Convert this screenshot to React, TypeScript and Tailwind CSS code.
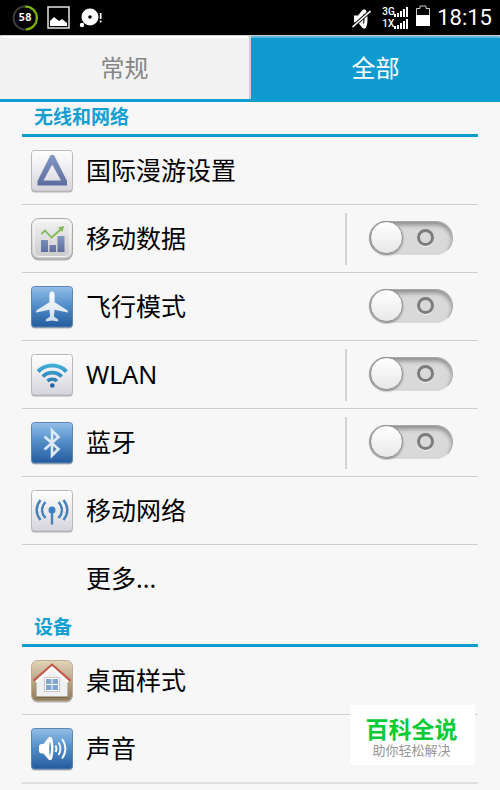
import { useId, useState } from "react";
import type { ReactNode } from "react";

type Tone = "light" | "blue" | "grey" | "tan";

const tones: Record<Tone, { top: string; bottom: string; edge: string; radius: number }> = {
  light: { top: "#ffffff", bottom: "#d6d5dc", edge: "#b9b9bd", radius: 3 },
  blue: { top: "#93bfe8", bottom: "#235b9d", edge: "#5c86b4", radius: 3 },
  grey: { top: "#f4f4f4", bottom: "#c9c9c9", edge: "#a9a9a9", radius: 7 },
  tan: { top: "#e3d3b5", bottom: "#8f7a58", edge: "#b9ad99", radius: 6 },
};

function Tile({ tone, children }: { tone: Tone; children: ReactNode }) {
  const id = useId();
  const t = tones[tone];
  return (
    <svg className="h-11 w-11 shrink-0" viewBox="0 0 44 44" aria-hidden="true">
      <defs>
        <linearGradient id={id} x1="0" y1="0" x2="0" y2="1">
          <stop offset="0" stopColor={t.top} />
          {tone === "blue" && <stop offset="0.45" stopColor="#5590ca" />}
          <stop offset="1" stopColor={t.bottom} />
        </linearGradient>
        <linearGradient id="slate" x1="0" y1="0" x2="0" y2="1">
          <stop offset="0" stopColor="#8199c4" />
          <stop offset="1" stopColor="#5d6c9f" />
        </linearGradient>
        <linearGradient id="sky" gradientUnits="userSpaceOnUse" x1="0" y1="9" x2="0" y2="35">
          <stop offset="0" stopColor="#45b9de" />
          <stop offset="1" stopColor="#2564a4" />
        </linearGradient>
        <linearGradient id="pearl" x1="0" y1="0" x2="0" y2="1">
          <stop offset="0" stopColor="#ffffff" />
          <stop offset="1" stopColor="#cfdcec" />
        </linearGradient>
      </defs>
      <rect x="1.5" y="2.5" width="41" height="41" rx={t.radius} fill="#000" opacity="0.28" />
      <rect x="1.5" y="1.5" width="41" height="40.5" rx={t.radius} fill={`url(#${id})`} stroke={t.edge} />
      {tone === "grey" && <rect x="4" y="4" width="36" height="35.5" rx="5" fill="none" stroke="#fff" opacity="0.8" />}
      {children}
    </svg>
  );
}

function RoamingIcon() {
  return (
    <Tile tone="light">
      <path fillRule="evenodd" fill="url(#slate)" d="M20.500 6h3.500l13 26v4.500H7.500V32zM22.200 15.500L13.500 31.500h17.500z" />
    </Tile>
  );
}

function DataIcon() {
  return (
    <Tile tone="grey">
      <path fill="url(#slate)" d="M11 23h7v12h-7zM19.500 28h6.500v7h-6.500zM27.500 19h7v16h-7z" />
      <path fill="none" stroke="#83b85a" strokeWidth="1.800" d="M11.500 17l3.500-3.500 6.500 7L32 11.500" />
      <path fill="#83b85a" d="M28 10.500l6-1.500-1.500 6z" />
    </Tile>
  );
}

function PlaneIcon() {
  return (
    <Tile tone="blue">
      <path
        fill="url(#pearl)"
        d="M22 6.500c1.700 0 2.600 1.500 2.600 4v6.800L37 25c1 .8 1 1.600.8 2.500l-13.200-2.800-.7 6.800 4.300 3v2L22 35.500l-6.200 1v-2l4.300-3-.7-6.800-13.200 2.800c-.2-.9-.2-1.700.8-2.500l12.400-7.700v-6.800c0-2.500.9-4 2.600-4z"
      />
    </Tile>
  );
}

function WlanIcon() {
  return (
    <Tile tone="light">
      <g fill="none" stroke="url(#sky)" strokeWidth="4">
        <path d="M8 18.500a20 20 0 0 1 28.500 0" />
        <path strokeWidth="3.600" d="M12.700 23.500a13.500 13.500 0 0 1 19 0" />
        <path strokeWidth="3.200" d="M17.500 28a6.700 6.700 0 0 1 9.500 0" />
      </g>
      <circle cx="22.300" cy="32.500" r="2.300" fill="#2564a4" />
    </Tile>
  );
}

function BluetoothIcon() {
  return (
    <Tile tone="blue">
      <path fill="none" stroke="#dce9f6" strokeWidth="2.600" d="M14.500 15.500l14 12.500-6.500 6.500V9.500l6.500 6.500-14 12.500" />
    </Tile>
  );
}

function AntennaIcon() {
  return (
    <Tile tone="light">
      <g fill="none" stroke="#4781ba" strokeWidth="2.400">
        <path d="M15.500 13c-4.500 5-4.500 11 0 16M28.500 13c4.500 5 4.500 11 0 16" />
        <path d="M10.500 11c-5 6.500-5 13.500 0 20M33.500 11c5 6.500 5 13.500 0 20" />
        <path d="M22 21v14.500" />
      </g>
      <circle cx="22" cy="21" r="3.500" fill="#3f7fc0" />
    </Tile>
  );
}

function HomeIcon() {
  return (
    <Tile tone="tan">
      <path fill="#5d4e35" opacity="0.5" d="M6.500 22h31v17h-31z" />
      <path fill="#f0f0f0" d="M22 7L6.500 21.500V37.500h31V21.500z" />
      <path fill="none" stroke="#fff" strokeWidth="2" d="M6 23L22 8.500 38 23" />
      <path fill="none" stroke="#c75650" strokeWidth="2" d="M3.500 21.500L22 5.500l18.500 16" />
      <path fill="#fff" stroke="#c8c8c8" d="M14.500 18.500h15v14h-15z" />
      <path fill="#7fa5d0" d="M16 20h5.500v5H16zM22.500 20H28v5h-5.500zM16 26h5.500v5H16zM22.500 26H28v5h-5.500z" />
    </Tile>
  );
}

function SoundIcon() {
  return (
    <Tile tone="blue">
      <path fill="#fff" d="M9 19.500c0-1.500 1-2.500 3-2.500h1.500l5-6.500c1.500-1.500 3.500-.5 4 2 1.300 6 1.300 12 0 18-.5 2.500-2.500 3.500-4 2l-5-6H12c-2 0-3-1-3-2.500z" />
      <path fill="#5d93c9" d="M20 14c1.400 4.500 1.400 11 0 15.500-1.200-4.500-1.200-11 0-15.500z" />
      <g fill="none" stroke="#f4f8fc" strokeWidth="2">
        <path d="M25.500 18.500c1.200 2 1.200 4.500 0 6.500" />
        <path d="M28.500 15.500c2.600 3.500 2.600 9 0 12.500" />
        <path d="M32 12c4.500 6 4.500 13.500 0 19.500" />
      </g>
    </Tile>
  );
}

function Toggle({ label }: { label: string }) {
  const [on, setOn] = useState(false);
  return (
    <label className="relative mr-[25px] mb-0.5 flex h-[34px] w-[84px] shrink-0 cursor-pointer items-center rounded-full border border-[#aaa] border-b-[#ddd] bg-[#d9d9d9] shadow-[inset_0_3px_4px_#8c8c8c]">
      <input
        type="checkbox"
        role="switch"
        aria-label={label}
        checked={on}
        onChange={(e) => setOn(e.target.checked)}
        className="peer absolute inset-0 cursor-pointer opacity-0"
      />
      <span className="h-[33px] w-[33px] rounded-full border border-[#8f8f8f] bg-linear-to-b from-white to-[#e8e8e8] shadow-[0_1px_2px_#777] peer-checked:order-last" />
      <span className="mx-[14px] h-[17px] w-[17px] rounded-full border-3 border-[#7c7c7c] shadow-[0_1px_0_#f5f5f5]" />
    </label>
  );
}

interface Item {
  label: string;
  icon?: ReactNode;
  toggle?: boolean;
  divided?: boolean;
}

const sections: { title: string; items: Item[] }[] = [
  {
    title: "无线和网络",
    items: [
      { label: "国际漫游设置", icon: <RoamingIcon /> },
      { label: "移动数据", icon: <DataIcon />, toggle: true, divided: true },
      { label: "飞行模式", icon: <PlaneIcon />, toggle: true },
      { label: "WLAN", icon: <WlanIcon />, toggle: true, divided: true },
      { label: "蓝牙", icon: <BluetoothIcon />, toggle: true, divided: true },
      { label: "移动网络", icon: <AntennaIcon /> },
      { label: "更多..." },
    ],
  },
  {
    title: "设备",
    items: [
      { label: "桌面样式", icon: <HomeIcon /> },
      { label: "声音", icon: <SoundIcon /> },
    ],
  },
];

function SignalBars() {
  return (
    <svg className="h-[10px] w-[15px]" viewBox="0 0 15 10" fill="#fff" aria-hidden="true">
      <path d="M0 7h2v3H0zM3 6h2v4H3zM6 4h2v6H6zM9 2h2v8H9zM12 0h2v10h-2z" />
    </svg>
  );
}

function StatusBar() {
  return (
    <header className="flex h-[35px] items-center bg-black pr-2 pl-3 text-white">
      <div className="flex items-center gap-[9px]">
        <div className="grid h-[26px] w-[26px] place-items-center font-['DejaVu_Sans_Mono',monospace] text-[11px] leading-none font-bold">
          <svg className="col-start-1 row-start-1 h-[26px] w-[26px]" viewBox="0 0 26 26" fill="none" strokeWidth="2" aria-hidden="true">
            <circle cx="13" cy="13" r="11.500" stroke="#3d3d3d" />
            <path d="M13 1.500a11.500 11.500 0 0 1 1 23" stroke="#7ab800" />
          </svg>
          <span className="col-start-1 row-start-1">58</span>
        </div>
        <svg className="h-[23px] w-[23px]" viewBox="0 0 23 23" aria-hidden="true">
          <rect x="1" y="1" width="21" height="21" fill="none" stroke="#e4e4e4" strokeWidth="1.500" />
          <path fill="#fff" d="M3 20v-5l4-4 5 4 3-2 5 4v3z" />
        </svg>
        <svg className="h-[22px] w-[24px]" viewBox="0 0 24 22" fill="#fff" aria-hidden="true">
          <path fillRule="evenodd" d="M11 1.500a8.500 8.500 0 1 0 0 17 8.500 8.500 0 0 0 0-17zm0 6.700a1.800 1.800 0 1 1 0 3.600 1.800 1.800 0 0 1 0-3.600z" />
          <circle cx="3" cy="18" r="2.200" />
          <path d="M20.800 6h1.700v6h-1.700zM20.800 13.500h1.700v2h-1.700z" />
        </svg>
      </div>
      <div className="ml-auto flex items-center gap-[7px]">
        <svg className="h-[22px] w-[20px]" viewBox="0 0 20 22" aria-hidden="true">
          <path fill="#fff" d="M3 8.500h4L11.500 3c3.500-2.500 5 2.500 5 9s-1.500 11.500-5 9L7 15.500H3z" />
          <path fill="#555" d="M12.500 6.500c1.700 3 1.700 8 0 11.500-1-3.500-1-8 0-11.500z" />
          <path fill="none" stroke="#000" strokeWidth="3.400" d="M1.500 20L19.500 4" />
          <path fill="none" stroke="#fff" strokeWidth="1.600" d="M1.500 20L19.500 4" />
        </svg>
        <div className="ml-1 grid grid-cols-[12px_15px] items-center gap-y-0.5 font-['Roboto',sans-serif] text-[10px] leading-[10px] font-medium">
          <span>3G</span>
          <SignalBars />
          <span>1X</span>
          <SignalBars />
        </div>
        <svg className="mb-1 h-[21px] w-[14px]" viewBox="0 0 14 21" aria-hidden="true">
          <path fill="none" stroke="#ccc" d="M.5 20V3.500H4V1h6v2.500h3.500V20z" />
          <path fill="#fff" d="M0 10h14v11H0z" />
        </svg>
        <time className="font-['Roboto',sans-serif] text-[22px] leading-none">18:15</time>
      </div>
    </header>
  );
}

export default function App() {
  const [tab, setTab] = useState("全部");
  return (
    <div className="min-h-screen bg-[#f7f7f7] font-['Noto_Sans','Noto_Sans_CJK_SC',sans-serif] text-black" lang="zh-CN">
      <StatusBar />
      <nav className="flex h-[67px] border-b-3 border-[#0f9bcf] bg-[#cdd0d1]">
        {["常规", "全部"].map((name) => (
          <button
            key={name}
            type="button"
            aria-pressed={tab === name}
            onClick={() => setTab(name)}
            className={
              tab === name
                ? "mt-px flex-1 rounded-t-xs border-t-2 border-[#5db7dc] bg-[#0f9bcf] pb-0.5 text-2xl text-white"
                : "mt-px mr-0.5 flex-1 rounded-t-xs border-t-2 border-white bg-[#f2f2f2] pb-0.5 text-2xl text-[#868686]"
            }
          >
            {name}
          </button>
        ))}
      </nav>
      <main className="px-[22px]">
        {sections.map((section) => (
          <section key={section.title}>
            <h2 className="h-[35px] border-b-3 border-[#0f9bcf] pl-3 text-[19px] leading-[30px] font-bold text-[#149fd2]">
              {section.title}
            </h2>
            <ul className="divide-y divide-[#cfcfcf]">
              {section.items.map((item) => (
                <li key={item.label} className="flex h-[68px] items-center pl-2 last:h-[67px]">
                  {item.icon ?? <span className="w-11" />}
                  <span className="flex-1 pb-0.5 pl-3 text-[25px] leading-8">{item.label}</span>
                  {item.divided && <span className="mr-[22px] h-[52px] w-0.5 bg-[#d2d2d2]" />}
                  {item.toggle && <Toggle label={item.label} />}
                </li>
              ))}
            </ul>
          </section>
        ))}
        <hr className="border-t-2 border-[#dedede]" />
      </main>
      <aside className="fixed right-[25px] bottom-[25px] flex h-[60px] w-[125px] flex-col items-center bg-white pt-3 pr-0.5 font-['Liberation_Sans','Noto_Sans_CJK_SC',sans-serif]">
        <strong className="text-[23px] leading-[26px] font-bold text-[#08cb35]">百科全说</strong>
        <span className="text-[13px] leading-4 text-[#969696]">助你轻松解决</span>
      </aside>
    </div>
  );
}
